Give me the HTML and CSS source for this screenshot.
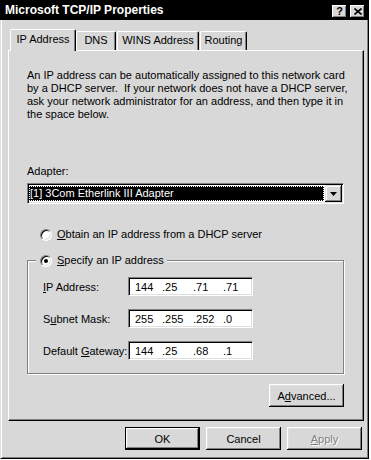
FILE: index.html
```html
<!DOCTYPE html>
<html lang="en">
<head>
    <meta charset="UTF-8">
    <title>Microsoft TCP/IP Properties</title>
    <link rel="stylesheet" href="styles.css">
</head>
<body>
    <div class="window">
        <div class="titlebar">
            <span class="title">Microsoft TCP/IP Properties</span>
            <div class="caption-buttons">
                <button class="cap-btn">?</button>
                <button class="cap-btn">
                    <svg width="8" height="7" viewBox="0 0 8 7">
                        <path d="M0.5 0.5 L7.5 6.5 M7.5 0.5 L0.5 6.5" stroke="#000" stroke-width="1.6" fill="none"/>
                    </svg>
                </button>
            </div>
        </div>

        <div class="frame">
            <div class="tabs">
                <div class="tab active">IP Address</div>
                <div class="tab tab-dns">DNS</div>
                <div class="tab tab-wins">WINS Address</div>
                <div class="tab tab-routing">Routing</div>
            </div>

            <div class="panel">
                <p class="intro">An IP address can be automatically assigned to this network card<br>by a DHCP server.&nbsp; If your network does not have a DHCP server,<br>ask your network administrator for an address, and then type it in<br>the space below.</p>

                <div class="label">Adapter:</div>
                <div class="combo">
                    <div class="combo-value"><span>[1] 3Com Etherlink III Adapter</span></div>
                    <div class="combo-btn">
                        <svg width="7" height="4" viewBox="0 0 7 4"><path d="M0 0 H7 L3.5 4 Z" fill="#000"/></svg>
                    </div>
                </div>

                <div class="radio-row">
                    <span class="radio"></span>
                    <span><u>O</u>btain an IP address from a DHCP server</span>
                </div>

                <fieldset class="group">
                    <legend><span class="radio checked"></span><span><u>S</u>pecify an IP address</span></legend>

                    <div class="field-row">
                        <span class="field-label"><u>I</u>P Address:</span>
                        <div class="ip-box"><span>144</span><span>.25</span><span>.71</span><span>.71</span></div>
                    </div>
                    <div class="field-row">
                        <span class="field-label">S<u>u</u>bnet Mask:</span>
                        <div class="ip-box"><span>255</span><span>.255</span><span>.252</span><span>.0</span></div>
                    </div>
                    <div class="field-row">
                        <span class="field-label">Default <u>G</u>ateway:</span>
                        <div class="ip-box"><span>144</span><span>.25</span><span>.68</span><span>.1</span></div>
                    </div>
                </fieldset>

                <div class="adv-row">
                    <button class="btn">A<u>d</u>vanced...</button>
                </div>
            </div>

            <div class="footer">
                <button class="btn default">OK</button>
                <button class="btn">Cancel</button>
                <button class="btn disabled"><u>A</u>pply</button>
            </div>
        </div>
    </div>
</body>
</html>
```

FILE: styles.css
```css
* {
    box-sizing: border-box;
}

body {
    margin: 0;
    background: #fff;
    font-family: "Liberation Sans", Arial, sans-serif;
    font-size: 11px;
    color: #000;
}

.window {
    width: 369px;
    height: 459px;
    display: flex;
    flex-direction: column;
}

/* title bar */
.titlebar {
    height: 20px;
    background: #000;
    display: flex;
    align-items: center;
    padding: 0 4px 0 5px;
}

.title {
    flex: 1;
    color: #fff;
    font-weight: bold;
    font-size: 12px;
}

.caption-buttons {
    display: flex;
    gap: 3px;
    margin-top: 2px;
}

.cap-btn {
    width: 15px;
    height: 13px;
    padding: 0;
    border: 0;
    background: #d8d8d8;
    box-shadow: inset -1px -1px #000, inset 1px 1px #fff, inset -2px -2px #808080;
    font: bold 11px "Liberation Sans", Arial, sans-serif;
    line-height: 12px;
    display: flex;
    align-items: center;
    justify-content: center;
}

/* dialog body */
.frame {
    flex: 1;
    background: #d8d8d8;
    border-left: 1px solid #dfdfdf;
    border-right: 1px solid #000;
    border-bottom: 1px solid #000;
    box-shadow: inset 1px 0 #fff, inset -1px -1px #808080;
    padding: 9px 4px 0 7px;
}

.tabs {
    display: flex;
    align-items: flex-end;
    height: 21px;
    padding-left: 2px;
}

.tab {
    height: 19px;
    border-top: 1px solid #fff;
    border-left: 1px solid #fff;
    border-right: 1px solid #000;
    border-radius: 2px 2px 0 0;
    box-shadow: inset -1px 0 #808080;
    text-align: center;
    line-height: 17px;
    margin-right: 1px;
}

.tab.active {
    width: 66px;
    height: 22px;
    margin-right: 0;
    margin-bottom: -1px;
    padding-top: 1px;
    position: relative;
    z-index: 1;
    background: #d8d8d8;
}

.tab-dns { width: 40px; }
.tab-wins { width: 82px; }
.tab-routing { width: 47px; }

.panel {
    height: 371px;
    border-top: 1px solid #fff;
    border-left: 1px solid #fff;
    border-right: 1px solid #000;
    border-bottom: 1px solid #000;
    box-shadow: inset -1px -1px #808080;
    padding: 18px 19px 0 18px;
}

.intro {
    margin: 0;
    line-height: 13px;
    white-space: nowrap;
}

.label {
    margin-top: 44px;
    line-height: 13px;
}

.combo {
    margin-top: 5px;
    height: 21px;
    display: flex;
    background: #fff;
    border: 1px solid;
    border-color: #808080 #fff #fff #808080;
    box-shadow: inset 1px 1px #000, inset -1px -1px #dfdfdf;
    padding: 1px;
}

.combo-value {
    flex: 1;
    height: 15px;
    margin: 1px 1px 1px 0;
    background: #000;
    color: #fff;
    outline: 1px dotted #fff;
    outline-offset: -1px;
    line-height: 15px;
    padding-left: 1px;
}

.combo-btn {
    width: 17px;
    height: 17px;
    background: #d8d8d8;
    box-shadow: inset -1px -1px #000, inset 1px 1px #dfdfdf, inset -2px -2px #808080, inset 2px 2px #fff;
    display: flex;
    align-items: center;
    justify-content: center;
}

.radio-row {
    margin-top: 24px;
    padding-left: 13px;
    display: flex;
    align-items: center;
    gap: 5px;
    line-height: 13px;
}

.radio {
    width: 12px;
    height: 12px;
    flex: none;
    border-radius: 50%;
    background: #fff;
    border: 1px solid;
    border-color: #808080 #fff #fff #808080;
    box-shadow: inset 1px 1px #000, inset -1px -1px #dfdfdf;
    display: flex;
    align-items: center;
    justify-content: center;
}

.radio.checked::after {
    content: "";
    width: 4px;
    height: 4px;
    border-radius: 50%;
    background: #000;
}

/* group box */
.group {
    margin: 13px 0 0;
    padding: 10px 0 13px 15px;
    border: 1px solid #808080;
    box-shadow: 1px 1px #fff, inset 1px 1px #fff;
    min-width: 0;
}

.group legend {
    margin-left: -7px;
    padding: 0 3px 0 4px;
    background: #d8d8d8;
    display: flex;
    align-items: center;
    gap: 5px;
    line-height: 13px;
}

.field-row {
    display: flex;
    align-items: center;
    height: 19px;
}

.field-row + .field-row {
    margin-top: 13px;
}

.field-label {
    width: 85px;
}

.ip-box {
    width: 125px;
    height: 19px;
    background: #fff;
    border: 1px solid;
    border-color: #808080 #fff #fff #808080;
    box-shadow: inset 1px 1px #000, inset -1px -1px #dfdfdf;
    display: flex;
    align-items: center;
    padding-left: 6px;
}

.ip-box span:nth-child(1) { width: 27px; }
.ip-box span:nth-child(2) { width: 31px; }
.ip-box span:nth-child(3) { width: 30px; }

.adv-row {
    margin-top: 10px;
    display: flex;
    justify-content: flex-end;
}

/* push buttons */
.btn {
    width: 75px;
    height: 23px;
    padding: 0;
    border: 0;
    background: #d8d8d8;
    color: #000;
    font: 11px "Liberation Sans", Arial, sans-serif;
    box-shadow: inset -1px -1px #000, inset 1px 1px #fff, inset -2px -2px #808080, inset 2px 2px #dfdfdf;
}

.btn.default {
    border: 1px solid #000;
}

.btn.disabled {
    color: #808080;
    text-shadow: 1px 1px #fff;
}

.footer {
    margin-top: 6px;
    padding-right: 2px;
    display: flex;
    justify-content: flex-end;
    gap: 6px;
}
```
